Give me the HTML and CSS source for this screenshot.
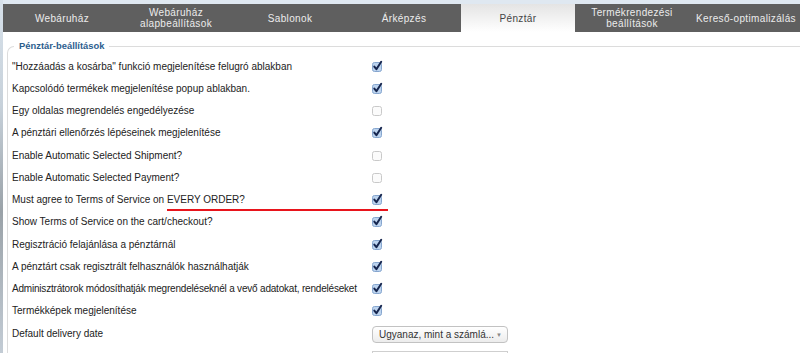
FILE: index.html
```html
<!DOCTYPE html>
<html lang="hu">
<head>
<meta charset="utf-8">
<title>Pénztár-beállítások</title>
<link rel="stylesheet" href="styles.css">
</head>
<body>
<div class="page">
  <div class="edge"></div>
  <div class="main">
    <div class="topstrip"></div>
    <nav class="tabs">
      <div class="tab">Webáruház</div>
      <div class="tab">Webáruház<br>alapbeállítások</div>
      <div class="tab">Sablonok</div>
      <div class="tab">Árképzés</div>
      <div class="tab active">Pénztár</div>
      <div class="tab">Termékrendezési<br>beállítások</div>
      <div class="tab">Kereső-optimalizálás</div>
    </nav>
    <fieldset class="box">
      <legend class="legend">Pénztár-beállítások</legend>
      <div class="rows">
        <div class="row"><span class="lbl">"Hozzáadás a kosárba" funkció megjelenítése felugró ablakban</span><span class="cb on"><svg viewBox="0 0 11 11"><rect x="0.5" y="1.5" width="9" height="9" rx="2"/><path d="M2.3 5.6 L4.4 8.2 L9.2 0.8"/></svg></span></div>
        <div class="row"><span class="lbl">Kapcsolódó termékek megjelenítése popup ablakban.</span><span class="cb on"><svg viewBox="0 0 11 11"><rect x="0.5" y="1.5" width="9" height="9" rx="2"/><path d="M2.3 5.6 L4.4 8.2 L9.2 0.8"/></svg></span></div>
        <div class="row"><span class="lbl">Egy oldalas megrendelés engedélyezése</span><span class="cb off"><svg viewBox="0 0 11 11"><rect x="0.5" y="1.5" width="9" height="9" rx="2"/></svg></span></div>
        <div class="row"><span class="lbl">A pénztári ellenőrzés lépéseinek megjelenítése</span><span class="cb on"><svg viewBox="0 0 11 11"><rect x="0.5" y="1.5" width="9" height="9" rx="2"/><path d="M2.3 5.6 L4.4 8.2 L9.2 0.8"/></svg></span></div>
        <div class="row"><span class="lbl">Enable Automatic Selected Shipment?</span><span class="cb off"><svg viewBox="0 0 11 11"><rect x="0.5" y="1.5" width="9" height="9" rx="2"/></svg></span></div>
        <div class="row"><span class="lbl">Enable Automatic Selected Payment?</span><span class="cb off"><svg viewBox="0 0 11 11"><rect x="0.5" y="1.5" width="9" height="9" rx="2"/></svg></span></div>
        <div class="row"><span class="lbl">Must agree to Terms of Service on EVERY ORDER?</span><span class="cb on"><svg viewBox="0 0 11 11"><rect x="0.5" y="1.5" width="9" height="9" rx="2"/><path d="M2.3 5.6 L4.4 8.2 L9.2 0.8"/></svg></span><span class="redline"></span></div>
        <div class="row"><span class="lbl">Show Terms of Service on the cart/checkout?</span><span class="cb on"><svg viewBox="0 0 11 11"><rect x="0.5" y="1.5" width="9" height="9" rx="2"/><path d="M2.3 5.6 L4.4 8.2 L9.2 0.8"/></svg></span></div>
        <div class="row"><span class="lbl">Regisztráció felajánlása a pénztárnál</span><span class="cb on"><svg viewBox="0 0 11 11"><rect x="0.5" y="1.5" width="9" height="9" rx="2"/><path d="M2.3 5.6 L4.4 8.2 L9.2 0.8"/></svg></span></div>
        <div class="row"><span class="lbl">A pénztárt csak regisztrált felhasználók használhatják</span><span class="cb on"><svg viewBox="0 0 11 11"><rect x="0.5" y="1.5" width="9" height="9" rx="2"/><path d="M2.3 5.6 L4.4 8.2 L9.2 0.8"/></svg></span></div>
        <div class="row"><span class="lbl tight">Adminisztrátorok módosíthatják megrendeléseknél a vevő adatokat, rendeléseket</span><span class="cb on"><svg viewBox="0 0 11 11"><rect x="0.5" y="1.5" width="9" height="9" rx="2"/><path d="M2.3 5.6 L4.4 8.2 L9.2 0.8"/></svg></span></div>
        <div class="row"><span class="lbl">Termékképek megjelenítése</span><span class="cb on"><svg viewBox="0 0 11 11"><rect x="0.5" y="1.5" width="9" height="9" rx="2"/><path d="M2.3 5.6 L4.4 8.2 L9.2 0.8"/></svg></span></div>
        <div class="row"><span class="lbl">Default delivery date</span><span class="select"><span class="seltext">Ugyanaz, mint a számlá...</span><span class="arrow">▼</span></span></div>
        <div class="row"><span class="lbl"></span><span class="datebox"><span class="dateinner"></span></span></div>
      </div>
    </fieldset>
  </div>
</div>
</body>
</html>
```
FILE: styles.css
```css
html, body {
  margin: 0;
  padding: 0;
  background: #ffffff;
  overflow: hidden;
}
body {
  font-family: "Liberation Sans", Arial, sans-serif;
  font-size: 10px;
  color: #222;
}
.page {
  display: flex;
  height: 353px;
}
.edge {
  width: 3px;
  flex: none;
  background: linear-gradient(#d7e1ea, #c7d1da 30%, #9aa2a8 60%, #c3ccd5);
}
.main {
  flex: 1;
  min-width: 0;
}
.topstrip {
  height: 4px;
  background: #dfe8f1;
}
.tabs {
  display: flex;
  height: 28px;
  padding-left: 2px;
  background: #5f5f5f;
}
.tab {
  flex: none;
  width: 114px;
  display: flex;
  align-items: center;
  justify-content: center;
  text-align: center;
  color: #ececec;
  font-size: 10px;
  line-height: 11px;
  letter-spacing: 0.35px;
  white-space: nowrap;
}
.tab.active {
  background: linear-gradient(#e4e4e4, #ffffff);
  color: #444;
}
.box {
  margin: 8px 0 0 4px;
  padding: 3px 0 0 0;
  border: 1px solid #dcdcdc;
  border-right: none;
  border-bottom: none;
  border-top-left-radius: 7px;
  min-width: 0;
}
.legend {
  margin-left: 6px;
  padding: 0 5px;
  font-size: 9.4px;
  font-weight: bold;
  line-height: 12px;
  color: #2d5e8e;
}
.rows {
  display: flex;
  flex-direction: column;
}
.row {
  position: relative;
  display: flex;
  align-items: center;
  height: 22.25px;
}
.lbl {
  flex: none;
  width: 360px;
  padding-left: 4px;
  white-space: nowrap;
  color: #222;
}
.lbl.tight {
  letter-spacing: -0.2px;
}
.cb {
  display: block;
  width: 11px;
  height: 11px;
}
.cb svg {
  display: block;
  width: 11px;
  height: 11px;
  overflow: visible;
}
.cb.on rect {
  fill: #bcd3ee;
  stroke: #86a6cf;
  stroke-width: 1;
}
.cb.on path {
  fill: none;
  stroke: #16264f;
  stroke-width: 2;
  stroke-linecap: round;
  stroke-linejoin: round;
}
.cb.off rect {
  fill: #fbfbfb;
  stroke: #c9c9c9;
  stroke-width: 1;
}
.redline {
  position: absolute;
  left: 159px;
  top: 20px;
  width: 221px;
  height: 2px;
  background: #e8141c;
}
.select {
  display: flex;
  align-items: center;
  justify-content: space-between;
  box-sizing: border-box;
  width: 136px;
  height: 17px;
  margin-top: 3px;
  padding: 0 5px 0 6px;
  border: 1px solid #c2c2c2;
  border-radius: 4px;
  background: linear-gradient(#ffffff, #ececec);
  color: #333;
  font-size: 10px;
}
.arrow {
  font-size: 6px;
  color: #888;
}
.datebox {
  display: block;
  box-sizing: border-box;
  width: 136px;
  height: 20px;
  margin-top: 12px;
  padding: 3px 0 0 4px;
  border: 1px solid #cfcfcf;
  border-bottom: none;
}
.dateinner {
  display: block;
  width: 71px;
  height: 14px;
  border: 1px solid #bdbdbd;
  border-radius: 3px;
}
```
